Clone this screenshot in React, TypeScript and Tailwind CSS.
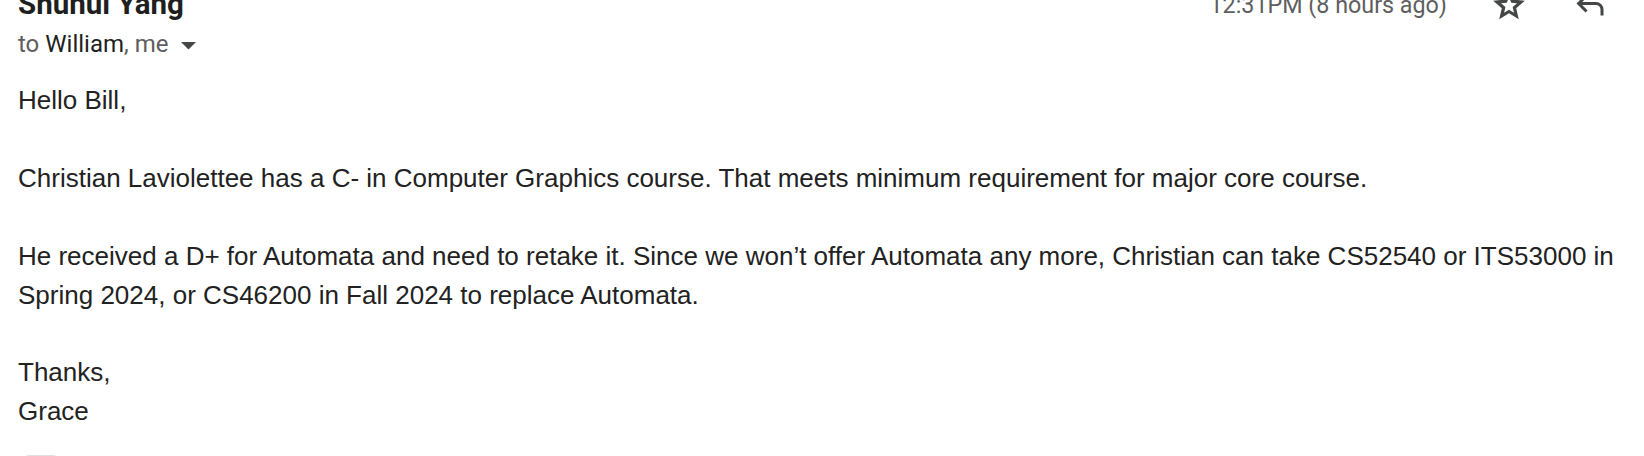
import React from "react";

function StarIcon() {
  return (
    <svg width="38" height="38" viewBox="0 -960 960 960" fill="#444746">
      <path d="m354-287 126-76 126 77-33-144 111-96-146-13-57-136-57 135-146 13 111 97-33 143ZM233-120l65-281L80-590l288-25 112-265 112 265 288 25-218 189 65 281-247-149-247 149Z" />
    </svg>
  );
}

function ReplyIcon() {
  return (
    <svg width="36" height="36" viewBox="0 -960 960 960" fill="#444746">
      <path d="M760-200v-160q0-50-35-85t-85-35H273l144 144-57 56-240-240 240-240 57 56-144 144h367q83 0 141.5 58.5T840-360v160h-80Z" />
    </svg>
  );
}

export default function App() {
  return (
    <div className="w-[1644px] h-[456px] overflow-hidden bg-white">
      <div className="-mt-[13px] pl-[18px]">
        <div className="flex items-start justify-between">
          <div className="flex flex-col">
            <div className="-mt-[1px] font-['Roboto',sans-serif] text-[29.5px] leading-[37px] font-bold text-[#1f1f1f]">
              Shunui Yang
            </div>
            <div className="mt-[5px] flex items-center font-['Roboto',sans-serif] text-[24px] leading-[32px] text-[#5e5e5e]">
              <span>to&nbsp;</span>
              <span className="text-[#1f1f1f]">William</span>
              <span>, me</span>
              <svg className="ml-[13px] mt-[3px]" width="15" height="8" viewBox="0 0 15 8">
                <polygon points="0,0 15,0 7.5,7.5" fill="#444746" />
              </svg>
            </div>
          </div>
          <div className="flex items-start pr-[36px]">
            <div className="mt-[2px] font-['Roboto',sans-serif] text-[23.3px] leading-[32px] text-[#5e5e5e]">
              12:31PM (8 hours ago)
            </div>
            <div className="ml-[43px] -mt-[1px]">
              <StarIcon />
            </div>
            <div className="ml-[44px] mt-[0px]">
              <ReplyIcon />
            </div>
          </div>
        </div>
        <div className="mt-[21px] pr-[18px] font-['Liberation_Sans',Arial,sans-serif] text-[26px] leading-[38.9px] text-[#222222]">
          <div>Hello Bill,</div>
          <div>&nbsp;</div>
          <div>
            Christian Laviolettee has a C- in Computer Graphics course. That meets minimum requirement for major core course.
          </div>
          <div>&nbsp;</div>
          <div>
            He received a D+ for Automata and need to retake it. Since we won’t offer Automata any more, Christian can take CS52540 or ITS53000 in Spring 2024, or CS46200 in Fall 2024 to replace Automata.
          </div>
          <div>&nbsp;</div>
          <div>Thanks,</div>
          <div>Grace</div>
        </div>
        <div className="ml-[5px] mt-[24px] h-[20px] w-[36px] rounded-t-[6px] border border-[#e0e0e0]" />
      </div>
    </div>
  );
}
